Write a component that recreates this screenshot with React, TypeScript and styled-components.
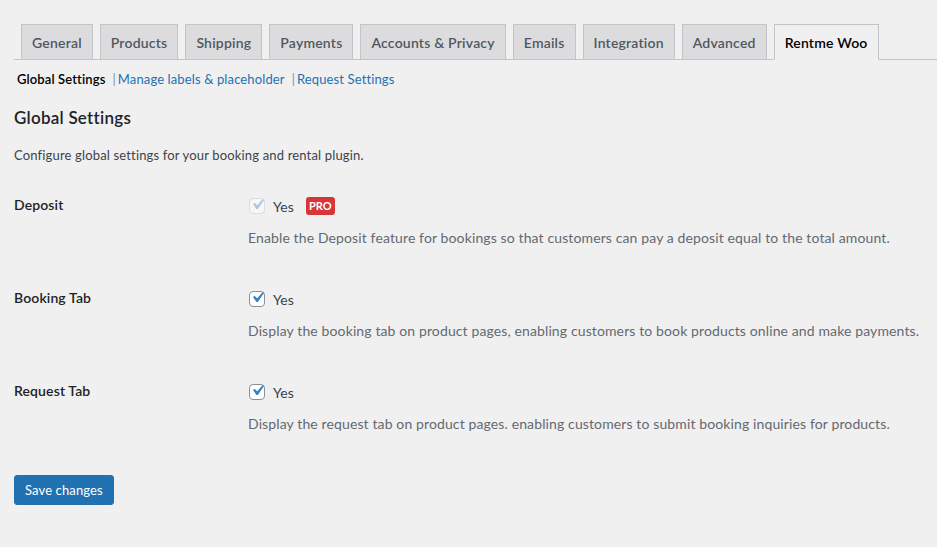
import React from "react";
import styled, { createGlobalStyle } from "styled-components";

const Global = createGlobalStyle`
  html, body { margin: 0; padding: 0; background: #f0f0f1; }
  body {
    font-family: Lato, "Noto Sans", sans-serif;
    color: #3c434a;
    font-size: 13px;
    letter-spacing: 0.12px;
  }
`;

const Page = styled.div`
  padding: 24px 0 40px 14px;
  width: 923px;
`;

const TabBar = styled.nav`
  display: flex;
  align-items: flex-end;
  border-bottom: 1px solid #c3c4c7;
  height: 35px;
`;

const Tab = styled.a<{ $active?: boolean }>`
  box-sizing: border-box;
  height: 36px;
  margin-left: 7px;
  margin-bottom: -1px;
  padding: 0 10px;
  display: flex;
  align-items: center;
  border: 1px solid #c3c4c7;
  border-bottom-color: ${(p) => (p.$active ? "#f0f0f1" : "#c3c4c7")};
  background: ${(p) => (p.$active ? "#f0f0f1" : "#dcdcde")};
  color: ${(p) => (p.$active ? "#000" : "#50575e")};
  font-size: 14px;
  font-weight: 600;
  letter-spacing: 0.2px;
  text-decoration: none;
  white-space: nowrap;
`;

const SubNav = styled.ul`
  list-style: none;
  margin: 6px 0 0 3px;
  padding: 0;
  display: flex;
  line-height: 26px;
  font-size: 13px;
`;

const SubItem = styled.li`
  display: flex;
  white-space: nowrap;
`;

const Sep = styled.span`
  color: #8c8f94;
  margin: 0 2px 0 7px;
`;

const SubLink = styled.a<{ $current?: boolean }>`
  color: ${(p) => (p.$current ? "#000" : "#2271b1")};
  font-weight: ${(p) => (p.$current ? 600 : 400)};
  text-decoration: none;
`;

const Heading = styled.h2`
  margin: 14px 0 0;
  font-size: 17px;
  line-height: 24px;
  font-weight: 600;
  letter-spacing: 0.25px;
  color: #1d2327;
`;

const Intro = styled.p`
  margin: 15px 0 0;
  line-height: 20px;
  font-size: 13px;
  letter-spacing: 0.16px;
  color: #3c434a;
`;

const Table = styled.div`
  margin-top: 11px;
  display: flex;
  flex-direction: column;
`;

const Row = styled.div`
  display: grid;
  grid-template-columns: 234px 1fr;
  padding: 20px 0 21px;
`;

const Label = styled.div`
  font-size: 14px;
  font-weight: 600;
  color: #1d2327;
  line-height: 18px;
`;

const Field = styled.div`
  display: flex;
  flex-direction: column;
`;

const CheckLine = styled.label`
  display: flex;
  align-items: center;
  height: 24px;
  margin-top: -2px;
  font-size: 14px;
  color: #3c434a;
`;

const Box = styled.span<{ $disabled?: boolean }>`
  box-sizing: border-box;
  width: 16px;
  height: 16px;
  margin: 0 8px 0 1px;
  border: 1px solid ${(p) => (p.$disabled ? "#dcdcde" : "#8c8f94")};
  border-radius: 4px;
  background: ${(p) => (p.$disabled ? "#f6f7f7" : "#fff")};
  display: flex;
  align-items: center;
  justify-content: center;
  overflow: visible;
`;

const YesText = styled.span`
  color: #3c434a;
`;

const Pro = styled.span`
  margin-left: 12px;
  background: #d63638;
  color: #fff;
  font-size: 11px;
  font-weight: 700;
  letter-spacing: 0;
  line-height: 18px;
  padding: 0 3px;
  border-radius: 3px;
`;

const Desc = styled.p`
  margin: 10px 0 0;
  font-size: 14px;
  line-height: 20px;
  color: #646970;
  white-space: nowrap;
`;

const SaveButton = styled.button`
  margin-top: 20px;
  height: 30px;
  padding: 0 10px;
  background: #2271b1;
  border: 1px solid #2271b1;
  border-radius: 3px;
  color: #fff;
  font-family: inherit;
  font-size: 13px;
  letter-spacing: 0.12px;
  line-height: 28px;
  cursor: pointer;
`;

const CheckSvg = styled.svg`
  flex: none;
  margin: -3px -3px 0 -2px;
`;

const Check = ({ light }: { light?: boolean }) => (
  <CheckSvg width="21" height="21" viewBox="0 0 20 20">
    <path
      d="M14.83 4.89l1.34.94-5.81 8.38H9.02L5.78 9.67l1.34-1.25 2.57 2.4z"
      fill={light ? "#a7c8e8" : "#3582c4"}
    />
  </CheckSvg>
);

const tabs = [
  "General",
  "Products",
  "Shipping",
  "Payments",
  "Accounts & Privacy",
  "Emails",
  "Integration",
  "Advanced",
  "Rentme Woo",
];

const rows = [
  {
    label: "Deposit",
    disabled: true,
    pro: true,
    desc: "Enable the Deposit feature for bookings so that customers can pay a deposit equal to the total amount.",
  },
  {
    label: "Booking Tab",
    desc: "Display the booking tab on product pages, enabling customers to book products online and make payments.",
  },
  {
    label: "Request Tab",
    desc: "Display the request tab on product pages. enabling customers to submit booking inquiries for products.",
  },
];

export default function App() {
  return (
    <>
      <Global />
      <Page>
        <TabBar>
          {tabs.map((t) => (
            <Tab key={t} $active={t === "Rentme Woo"}>
              {t}
            </Tab>
          ))}
        </TabBar>
        <SubNav>
          <SubItem>
            <SubLink $current>Global Settings</SubLink>
          </SubItem>
          <SubItem>
            <Sep>|</Sep>
            <SubLink>Manage labels &amp; placeholder</SubLink>
          </SubItem>
          <SubItem>
            <Sep>|</Sep>
            <SubLink>Request Settings</SubLink>
          </SubItem>
        </SubNav>
        <Heading>Global Settings</Heading>
        <Intro>Configure global settings for your booking and rental plugin.</Intro>
        <Table>
          {rows.map((r) => (
            <Row key={r.label}>
              <Label>{r.label}</Label>
              <Field>
                <CheckLine>
                  <Box $disabled={r.disabled}>
                    <Check light={r.disabled} />
                  </Box>
                  <YesText>Yes</YesText>
                  {r.pro && <Pro>PRO</Pro>}
                </CheckLine>
                <Desc>{r.desc}</Desc>
              </Field>
            </Row>
          ))}
        </Table>
        <SaveButton>Save changes</SaveButton>
      </Page>
    </>
  );
}
